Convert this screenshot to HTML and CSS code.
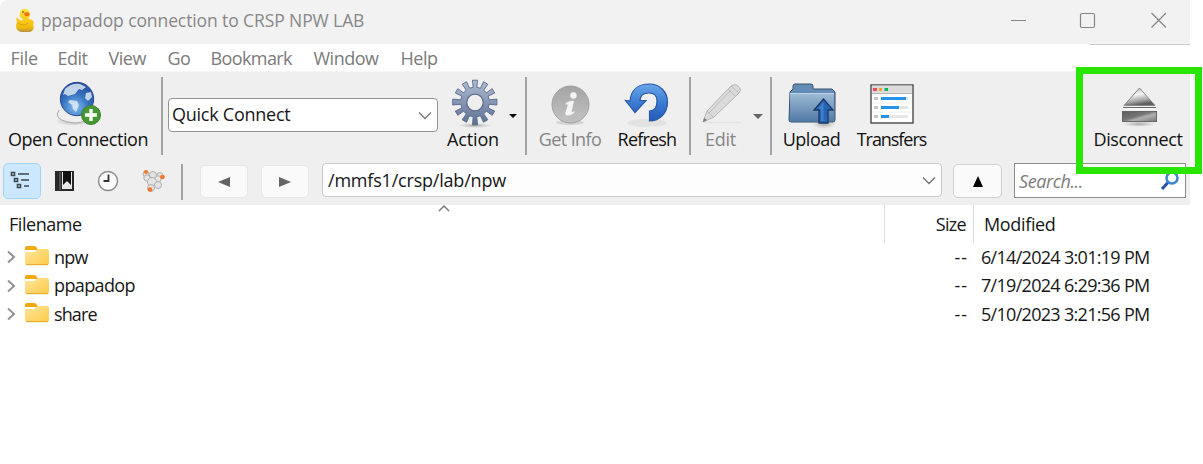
FILE: index.html
```
<!DOCTYPE html>
<html lang="en">
<head>
<meta charset="utf-8">
<title>ppapadop connection to CRSP NPW LAB</title>
<link rel="stylesheet" href="styles.css">
</head>
<body>
<svg class="defs" width="0" height="0">
  <defs>
    <linearGradient id="blue" x1="0" y1="0" x2="0" y2="1"><stop offset="0" stop-color="#6ba6ea"/><stop offset=".5" stop-color="#3c7cd4"/><stop offset="1" stop-color="#2459b4"/></linearGradient>
    <radialGradient id="globe" cx=".45" cy=".75" r=".75"><stop offset="0" stop-color="#83bdf0"/><stop offset=".55" stop-color="#3370bd"/><stop offset="1" stop-color="#2a4fa0"/></radialGradient>
    <linearGradient id="gear" x1="0" y1="0" x2="0" y2="1"><stop offset="0" stop-color="#b0bdd4"/><stop offset=".5" stop-color="#8596b4"/><stop offset="1" stop-color="#5d6f90"/></linearGradient>
    <linearGradient id="grey" x1="0" y1="0" x2="0" y2="1"><stop offset="0" stop-color="#a4a4a4"/><stop offset="1" stop-color="#c2c2c2"/></linearGradient>
    <linearGradient id="folder" x1="0" y1="0" x2="0" y2="1"><stop offset="0" stop-color="#9fbcd6"/><stop offset="1" stop-color="#527ba6"/></linearGradient>
    <linearGradient id="yellow" x1="0" y1="0" x2="1" y2="1"><stop offset="0" stop-color="#ffe7a2"/><stop offset="1" stop-color="#fdca43"/></linearGradient>
    <linearGradient id="duck" x1="0" y1="0" x2="0" y2="1"><stop offset="0" stop-color="#ffe33c"/><stop offset=".8" stop-color="#f3bc0a"/><stop offset="1" stop-color="#b89345"/></linearGradient>
    <linearGradient id="metal" x1="0" y1="0" x2=".3" y2="1"><stop offset="0" stop-color="#aaa"/><stop offset=".45" stop-color="#f5f5f5"/><stop offset=".8" stop-color="#a5a5a5"/><stop offset="1" stop-color="#606060"/></linearGradient>
    <linearGradient id="bar" x1="0" y1="0" x2="1" y2="1"><stop offset="0" stop-color="#5c5c5c"/><stop offset=".45" stop-color="#777"/><stop offset=".6" stop-color="#b0b0b0"/><stop offset="1" stop-color="#777"/></linearGradient>
    <radialGradient id="shadow"><stop offset="0" stop-color="#777" stop-opacity=".6"/><stop offset="1" stop-color="#999" stop-opacity="0"/></radialGradient>
    <g id="folder-icon"><path d="M1 3Q1 1 3 1H10Q12 1 13 3L14 5H1Z" fill="#f2a90c"/><path d="M1 7H10L14 4H23Q25 4 25 6V18Q25 20 23 20H3Q1 20 1 18Z" fill="url(#yellow)"/><path d="M2 19.7H24" stroke="#e5a524"/></g>
  </defs>
</svg>

<div class="window">
  <header class="titlebar">
    <svg class="duck" width="20" height="26" viewBox="0 0 20 26"><path d="M5 5C5 1 11-1 14 3C16 6 15 9 13 11C18 11 20 14 18 17C20 21 17 24 14 24H6C1 23 0 18 2 14C1 11 1 9 3 10C5 13 7 13 8 11C5 10 4 8 5 5Z" fill="url(#duck)"/><path d="M3 15Q8 19 13 15" fill="none" stroke="#d8a30c"/><path d="M9 5Q13 3 15 6Q14 9 10 8Z" fill="#ef7119"/><circle cx="8" cy="4" r=".8" fill="#4e3908"/></svg>
    <h1 class="title">ppapadop connection to CRSP NPW LAB</h1>
    <svg class="controls" width="160" height="20" viewBox="0 0 160 20" fill="none" stroke="#858585" stroke-width="1.2"><path d="M3 10.500H18M143.500 3L158 17.500M158 3L143.500 17.500"/><rect x="72.500" y="3.500" width="14" height="14" rx="1.500"/></svg>
  </header>

  <nav class="menu">
    <span class="m-file">File</span><span class="m-edit">Edit</span><span class="m-view">View</span><span class="m-go">Go</span><span class="m-book">Bookmark</span><span class="m-win">Window</span><span class="m-help">Help</span>
  </nav>

  <div class="tools">
    <div class="toolbar">
      <div class="tool">
        <svg width="48" height="50" viewBox="0 0 48 50"><ellipse cx="20" cy="42" rx="19" ry="5" fill="url(#shadow)"/><path d="M5 31Q-1 40 14 43Q27 46 32 40" fill="#eee" stroke="#aaa"/><circle cx="23" cy="20" r="16.700" fill="url(#globe)" stroke="#294a91"/><path d="M11 10Q17 4 26 5L32 8L28 11L25 10L21 15L14 17L11 15L9 16ZM16 21L23 22L25 26L22 33L19 30L18 26L14 23ZM32 14L37 13L38 18L34 22L31 19Z" fill="#e2edf5" opacity=".82"/><circle cx="37" cy="36" r="9.500" fill="#469832" stroke="#3d7d34"/><path d="M37 30V42M31 36H43" stroke="#fff" stroke-width="3.400"/></svg>
        <span class="l-open">Open Connection</span>
      </div>
      <i class="sep"></i>
      <div class="select quick"><span class="l-quick">Quick Connect</span><svg class="chev" width="14" height="9" viewBox="0 0 14 9"><path d="M1 1.500L7 7.500L13 1.500" fill="none" stroke="#777" stroke-width="1.300"/></svg></div>
      <div class="tool action">
        <svg width="48" height="50" viewBox="0 0 48 50"><ellipse cx="24" cy="46.500" rx="17" ry="2.500" fill="url(#shadow)"/><path d="M22.200 8.300L21.500 1.200L26.500 1.200L25.800 8.300L29.500 9.200L32.500 2.700L36.800 5.300L32.700 11.100L35.400 13.800L41.200 9.700L43.700 14L37.200 17L38.200 20.800L45.900 20.100L45.900 26L38.200 25.300L37.200 29L43.700 32.100L41.200 36.300L35.400 32.200L32.700 34.900L36.800 40.700L32.500 43.300L29.500 36.800L25.800 37.800L26.500 45.800L21.500 45.800L22.200 37.800L18.500 36.800L15.500 43.300L11.200 40.700L15.300 34.900L12.600 32.200L6.800 36.300L4.300 32.100L10.800 29L9.800 25.300L1.700 26L1.700 20.100L9.800 20.800L10.800 17L4.300 14L6.800 9.700L12.600 13.800L15.300 11.100L11.200 5.300L15.500 2.700L18.500 9.200Z" fill="url(#gear)" stroke="#56678a" stroke-width=".9"/><circle cx="24" cy="23.500" r="8.300" fill="#efefef" stroke="#5c6d8b" stroke-width="1.300"/></svg>
        <span class="l-action">Action</span>
      </div>
      <svg class="drop" width="10" height="6" viewBox="0 0 10 6"><path d="M1 1H9L5 5Z" fill="#000"/></svg>
      <i class="sep"></i>
      <div class="tool muted">
        <svg width="48" height="50" viewBox="0 0 48 50"><ellipse cx="24" cy="43.500" rx="14" ry="2.500" fill="#d4d4d4"/><circle cx="24.500" cy="25.500" r="18.500" fill="url(#grey)" stroke="#a0a0a0"/><circle cx="27.500" cy="16.500" r="3.200" fill="#f4f4f4"/><path d="M20 24Q25 21 28 22L25.500 33L29 32.500Q26 37 21 36.500Q18 36 20 32L22 25.500H19Z" fill="#f4f4f4"/></svg>
        <span class="l-info">Get Info</span>
      </div>
      <div class="tool">
        <svg width="48" height="50" viewBox="0 0 48 50"><ellipse cx="24" cy="44" rx="20" ry="4" fill="#e2e2e2"/><path d="M7 22C8 11 15 5 26 5C37 5 44.500 13 44.500 23C44.500 34 37 42 26.500 42V32C32 32 34 28 34 22C34 17 31 14 26 14C20 14 17 17 17 21.500H23L12 33.500L2.500 21.500Z" fill="url(#blue)" stroke="#2857a4" stroke-width="1.200"/></svg>
        <span class="l-refresh">Refresh</span>
      </div>
      <i class="sep"></i>
      <div class="tool muted">
        <svg width="48" height="50" viewBox="0 0 48 50"><path d="M7 43.500H44" stroke="#e2e2e2" stroke-width="1.500"/><path d="M6 43L10 32L33 8Q37 4 41 7Q45 10 42 14L17 38Z" fill="#dadada" stroke="#b4b4b4"/><path d="M12 34L34 11M10 32L16 38M31 10L38 17M34 7L42 14" stroke="#bdbdbd" fill="none"/><path d="M6 43L7 39L10 41Z" fill="#777"/></svg>
        <span class="l-edit">Edit</span>
      </div>
      <svg class="drop wide" width="12" height="7" viewBox="0 0 12 7"><path d="M1 1H11L6 6Z" fill="#666"/></svg>
      <i class="sep"></i>
      <div class="tool">
        <svg width="50" height="50" viewBox="0 0 50 50"><ellipse cx="37" cy="45" rx="12" ry="5" fill="url(#shadow)"/><path d="M3 13L6 10V7Q6 5 8 5H24Q26 5 26 7V10H45L48 13V41Q48 43 46 43H4Q2 43 2 41Z" fill="#628bb5" stroke="#36526f"/><path d="M3 14H47V40Q47 42 45 42H5Q3 42 3 40Z" fill="url(#folder)"/><path d="M3 14.500H47" stroke="#bdd2e5"/><path d="M36.500 20L46 31H41V44H32V31H27Z" fill="#2764b2" stroke="#1c3569" stroke-width="1.300"/><path d="M34 30H31L36.500 23V42H34Z" fill="#3d81cd"/></svg>
        <span class="l-upload">Upload</span>
      </div>
      <div class="tool">
        <svg width="48" height="50" viewBox="0 0 48 50"><rect x="3" y="6" width="42" height="38" fill="#fff" stroke="#545454" stroke-width="1.500"/><path d="M4 10H44" stroke="#dbdbdb" stroke-width="7"/><path d="M4 14.300H44" stroke="#a7a7a7"/><path d="M5 10.500H9" stroke="#f6465b" stroke-width="3"/><path d="M11 10.500H14" stroke="#f6a237" stroke-width="3"/><path d="M16.500 10.500H20" stroke="#08b95a" stroke-width="3"/><path d="M6 19.500H10M6 28.500H10M6 37.500H10" stroke="#c5c5c5" stroke-width="3"/><path d="M13 19.500H40M13 28.500H40M13 37.500H40" stroke="#e6e6e6" stroke-width="3"/><path d="M13 19.500H38M13 28.500H31M13 37.500H21" stroke="#2693eb" stroke-width="3"/><path d="M4 24H44M4 33H44" stroke="#ececec"/></svg>
        <span class="l-transfers">Transfers</span>
      </div>
      <div></div>
      <div class="tool eject">
        <svg width="48" height="50" viewBox="0 0 48 50"><ellipse cx="25" cy="45" rx="17" ry="3" fill="url(#shadow)"/><path d="M25.500 9L41 26.500H10Z" fill="url(#metal)" stroke="#888"/><path d="M9 28.500H42" stroke="#666"/><path d="M9 30H42" stroke="#fff"/><rect x="8.500" y="32.500" width="34" height="10" fill="url(#bar)" stroke="#666"/></svg>
        <span class="l-disconnect">Disconnect</span>
      </div>
    </div>

    <div class="pathbar">
      <div class="mode selected"><svg width="38" height="36" viewBox="0 0 38 36" fill="none" stroke="#3b464e" stroke-width="1.600"><path d="M8.500 9.500h3v3h-3zM11.500 15.500h3v3h-3zM14.500 21.500h3v3h-3zM15 11H26M18 17H26M21 23H26"/></svg></div>
      <svg class="book" width="22" height="22" viewBox="0 0 22 22"><rect x="1" y="1" width="19" height="20" fill="#292929"/><path d="M6 2V20" stroke="#777"/><path d="M8 2H18V19H8Z" fill="#e8e8e8"/><path d="M9 1H17V15L13 11L9 15Z" fill="#111"/></svg>
      <svg class="clock" width="24" height="24" viewBox="0 0 24 24"><circle cx="12" cy="12" r="9.500" fill="#fafafa" stroke="#8e8e8e" stroke-width="1.500"/><path d="M12.500 5.500V12H7.500" fill="none" stroke="#333" stroke-width="1.800"/></svg>
      <svg class="bonjour" width="26" height="26" viewBox="0 0 26 26"><g fill="#e4e4e4" stroke="#b0b0b0"><circle cx="6" cy="6" r="3"/><circle cx="20" cy="7.500" r="3"/><circle cx="7" cy="10" r="3.200"/><circle cx="18" cy="11" r="3.200"/><circle cx="13" cy="7" r="3.500"/><circle cx="12" cy="14" r="4.500"/><circle cx="18" cy="17" r="3.500"/><circle cx="11" cy="20" r="3.500"/></g><g fill="#f27829"><circle cx="6" cy="4" r="2"/><circle cx="22.500" cy="9" r="2.300"/><circle cx="10" cy="21.500" r="2.300"/></g></svg>
      <i class="sep small"></i>
      <button class="arrow back"><svg width="12" height="12"><path d="M0 6L12 1V11Z" fill="#646464"/></svg></button>
      <button class="arrow forward"><svg width="12" height="12"><path d="M0 1L12 6L0 11Z" fill="#646464"/></svg></button>
      <div class="select path"><span class="l-path">/mmfs1/crsp/lab/npw</span><svg class="chev" width="14" height="9" viewBox="0 0 14 9"><path d="M1 1.500L7 7.500L13 1.500" fill="none" stroke="#777" stroke-width="1.500"/></svg></div>
      <button class="arrow up"><svg width="12" height="13"><path d="M6 1L11 12H1Z" fill="#000"/></svg></button>
      <div class="search"><span class="l-search">Search...</span><svg width="20" height="20" viewBox="0 0 20 20"><path d="M2 18L8 11.500" stroke="#2854a5" stroke-width="3"/><circle cx="12" cy="7" r="5.500" fill="#f8fcff" stroke="#3b86d0" stroke-width="2.500"/></svg></div>
    </div>
  </div>

  <main class="files">
    <div class="row head"><span class="name l-filename">Filename</span><span class="size"><b class="l-size">Size</b></span><span class="date l-modified">Modified</span></div>
    <div class="row"><span class="name"><svg class="exp" width="10" height="14" viewBox="0 0 10 14"><path d="M2 1.500L8 7L2 12.500"/></svg><svg class="fold" width="26" height="22"><use href="#folder-icon"/></svg><b class="l-npw">npw</b></span><span class="size">--</span><span class="date">6/14/2024 3:01:19 PM</span></div>
    <div class="row"><span class="name"><svg class="exp" width="10" height="14" viewBox="0 0 10 14"><path d="M2 1.500L8 7L2 12.500"/></svg><svg class="fold" width="26" height="22"><use href="#folder-icon"/></svg><b class="l-pp">ppapadop</b></span><span class="size">--</span><span class="date">7/19/2024 6:29:36 PM</span></div>
    <div class="row"><span class="name"><svg class="exp" width="10" height="14" viewBox="0 0 10 14"><path d="M2 1.500L8 7L2 12.500"/></svg><svg class="fold" width="26" height="22"><use href="#folder-icon"/></svg><b class="l-share">share</b></span><span class="size">--</span><span class="date">5/10/2023 3:21:56 PM</span></div>
  </main>
  <svg class="sort" width="12" height="8" viewBox="0 0 12 8"><path d="M1 7L6 2L11 7" fill="none" stroke="#777" stroke-width="1.500"/></svg>
  <i class="edge"></i>
  <div class="highlight"></div>
</div>
</body>
</html>
```
FILE: styles.css
```
* { box-sizing: border-box; }
body { margin: 0; background: #fff; color: #161616; font: 18px/24px "Open Sans", "Noto Sans", sans-serif; letter-spacing: -.5px; overflow: hidden; }
b { font-weight: 400; }
svg { display: block; flex: none; }
.defs { position: absolute; }
.window { position: relative; width: 1190px; height: 464px; border-top-left-radius: 8px; }
.titlebar { display: flex; height: 44px; background: #f2f2f2; border-top-left-radius: 7px; padding-left: 15px; color: #878787; }
.duck { margin-top: 8px; }
.title { font-size: 17.5px; line-height: 24px; font-weight: 400; letter-spacing: -.1px; margin: 8px 0 0 6px; white-space: nowrap; }
.controls { margin: 10px 22px 0 auto; }
.menu { display: flex; height: 27px; padding: 2px 0 0 10.5px; color: #7b7b7b; }
.menu span { white-space: nowrap; }
.m-file { width: 47px; letter-spacing: -.3px; }
.m-edit { width: 51px; }
.m-view { width: 59px; }
.m-go { width: 43px; }
.m-book { width: 103px; letter-spacing: -.6px; }
.m-win { width: 87px; letter-spacing: -.5px; }
.tools { height: 134px; background: #efefef; border-top: 1px solid #f6f6f6; }
.toolbar { display: grid; height: 88px; grid-template-columns: 156px 12px 270px 70px 12px 12px 76px 78px 8px 53px 22px 3px 79px 81px 1fr 104px; }
.tool { display: flex; flex-direction: column; align-items: center; padding-top: 7px; color: #111; white-space: nowrap; }
.tool span { margin-top: -2px; }
.tool.muted { color: #858585; }
.action > svg { margin-left: 3px; }
.l-open { letter-spacing: -.43px; }
.l-quick { letter-spacing: -.25px; margin-top: -2px; }
.l-action { letter-spacing: -.15px; }
.l-info { letter-spacing: -.6px; }
.l-refresh { letter-spacing: -.8px; }
.l-edit { letter-spacing: -.3px; }
.l-upload { letter-spacing: -.5px; }
.l-transfers { letter-spacing: -1.05px; }
.l-disconnect { letter-spacing: -.4px; }
.l-path { letter-spacing: -.2px; }
.l-search { letter-spacing: -.4px; }
.l-filename { letter-spacing: -.45px; }
.l-size { letter-spacing: -.7px; }
.l-modified { letter-spacing: -.35px; }
.l-npw { letter-spacing: -.8px; }
.l-pp { letter-spacing: -.62px; }
.l-share { letter-spacing: -.9px; }
.sep { width: 2px; height: 78px; margin: 5px auto 0; background: #a4a4a4; }
.drop { margin: 41px 0 0; }
.wide { margin-left: 5px; }
.select { display: flex; align-items: center; background: #fff; border: 1px solid #959595; border-radius: 4px; padding: 0 5px 0 4px; }
.chev { margin-left: auto; }
.quick { height: 34px; margin-top: 26px; padding-left: 3px; }
.pathbar { display: flex; height: 45px; padding: 3px 4px 0 3px; }
.mode { width: 38px; height: 36px; border-radius: 5px; border: 1px solid #a2d4fa; background: #cce8ff; }
.mode svg { margin: -1px; }
.book { margin: 7px 0 0 13px; }
.clock { margin: 6px 0 0 20px; }
.bonjour { margin: 5px 0 0 20px; }
.small { height: 36px; margin: 1px 0 0 15px; }
.arrow { display: flex; align-items: center; justify-content: center; width: 48px; height: 33px; margin-top: 2px; padding: 0; border: 1px solid #e7e7e7; border-radius: 5px; background: #fafafa; }
.back { margin-left: 17px; }
.forward { margin-left: 13px; }
.path { width: 620px; height: 34px; margin: 0 0 0 13px; border-color: #cacaca; background: #fdfdfd; padding-left: 5px; }
.up { width: 49px; height: 34px; margin: 1px 0 0 11px; border-color: #d1d1d1; }
.search { display: flex; align-items: center; width: 172px; height: 35px; margin-left: 12px; border: 1px solid #8d8d8d; background: #fff; color: #7c7c7c; font-style: italic; padding: 1px 5px 0 4px; }
.search svg { margin-left: auto; }
.row { display: grid; grid-template-columns: 884px 90px 1fr; height: 28.5px; }
.head { height: 38px; }
.name { display: flex; align-items: center; }
.name b { margin-top: -1px; }
.head .name { padding-left: 9px; }
.size { display: flex; align-items: center; justify-content: flex-end; padding-right: 6px; letter-spacing: 1px; }
.head .size { border-left: 1px solid #ddd; border-right: 1px solid #ddd; padding-right: 7px; }
.date { display: flex; align-items: center; padding-left: 7px; letter-spacing: -.7px; white-space: nowrap; }
.row .size, .row .date, .head .name { padding-bottom: 1px; }
.row .date.l-modified { padding-left: 10px; letter-spacing: -.35px; }
.exp { margin-left: 6px; fill: none; stroke: #929292; stroke-width: 2; }
.fold { margin: -2px 4px 0 8px; }
.sort { position: absolute; left: 438px; top: 204px; }
.edge { position: absolute; left: 1090px; top: 44px; width: 100px; height: 1px; background: #ccc; }
.highlight { position: absolute; left: 1076px; top: 67px; width: 126px; height: 107px; border: 7px solid #28e600; }
```
